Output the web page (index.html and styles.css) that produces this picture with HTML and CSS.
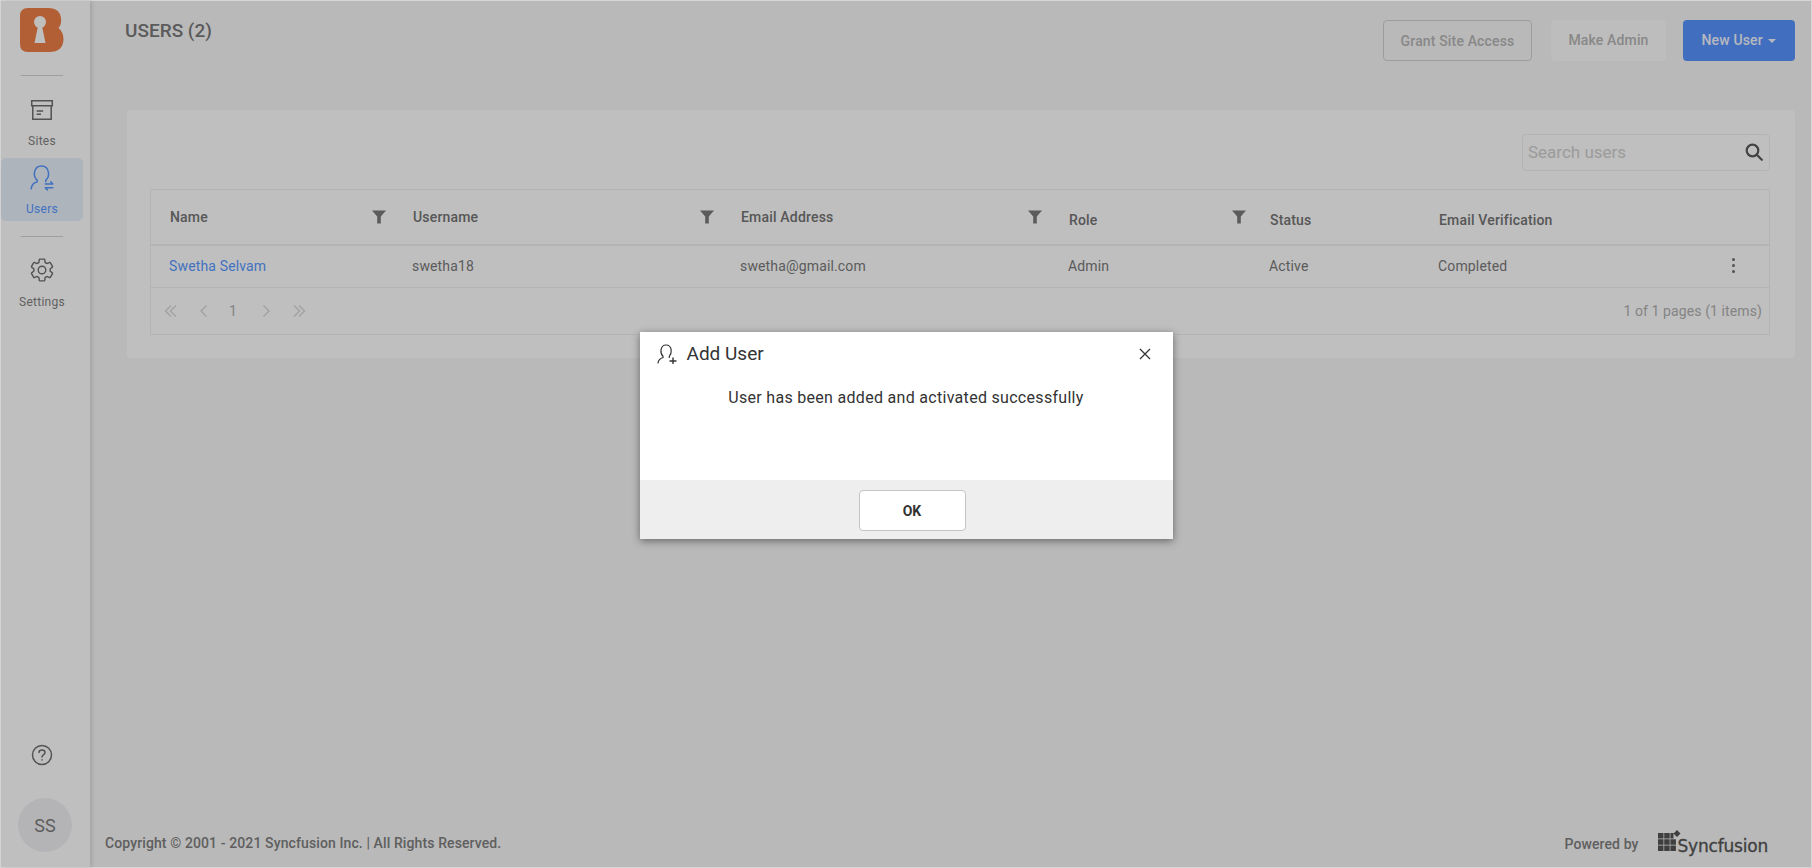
FILE: index.html
```html
<!DOCTYPE html>
<html lang="en">
<head>
<meta charset="utf-8">
<title>Users</title>
<link rel="stylesheet" href="styles.css">
</head>
<body>
<div class="app">
  <aside class="sidebar">
    <svg class="logo" viewBox="0 0 44 44"><path fill="#ee7f47" d="M8 0H29Q39.500 0 41 10Q41.800 16.500 38.500 20Q43.500 24 43.500 31.500Q43 44 29 44H8Q0 44 0 36V8Q0 0 8 0Z"/><circle cx="20" cy="14" r="6" fill="#fff"/><path fill="#fff" d="M18 18H22L25.500 35H14.500Z"/></svg>
    <div class="rule"></div>
    <a class="nav">
      <svg class="nav-icon" viewBox="0 0 24 24" fill="none" stroke="#6f6f6f" stroke-width="1.400"><path d="M2.500 3.500H21.500V8H2.500Z"/><path d="M3.500 8V20.500H20.500V8"/><path d="M7 13H13M7 16H11"/></svg>
      <span>Sites</span>
    </a>
    <a class="nav active">
      <svg class="nav-icon" viewBox="0 0 24 24" fill="none" stroke="#5898ff" stroke-width="1.400" stroke-linecap="round"><path d="M2 22Q2.500 17 7.500 15.500V14Q4.500 11.500 5 7Q6 1 11.500 1Q17 1 18 7Q18.500 11.500 15.500 14V15.500"/><path d="M15 17.500H22M20 15.500L22 17.500M15 21H22M17 23L15 21"/></svg>
      <span>Users</span>
    </a>
    <div class="rule rule-b"></div>
    <a class="nav nav-settings">
      <svg class="nav-icon" viewBox="0 0 24 24" fill="none" stroke="#6f6f6f" stroke-width="1.300" stroke-linejoin="round"><circle cx="12" cy="12" r="3.500"/><path d="M19.430 12.980c.04-.32.07-.64.07-.98s-.03-.66-.07-.98l2.110-1.650c.19-.15.24-.42.12-.64l-2-3.460c-.12-.22-.39-.3-.61-.22l-2.490 1c-.52-.4-1.080-.73-1.690-.98l-.38-2.650C14.460 2.180 14.250 2 14 2h-4c-.25 0-.46.18-.49.42l-.38 2.650c-.61.25-1.170.59-1.690.98l-2.490-1c-.23-.09-.49 0-.61.22l-2 3.460c-.13.22-.07.49.12.64l2.110 1.650c-.04.32-.07.65-.07.98s.03.66.07.98l-2.110 1.650c-.19.15-.24.42-.12.64l2 3.460c.12.22.39.3.61.22l2.490-1c.52.4 1.080.73 1.690.98l.38 2.650c.03.24.24.42.49.42h4c.25 0 .46-.18.49-.42l.38-2.650c.61-.25 1.170-.59 1.690-.98l2.490 1c.23.09.49 0 .61-.22l2-3.460c.12-.22.07-.49-.12-.64l-2.110-1.650z"/></svg>
      <span>Settings</span>
    </a>
    <svg class="help" viewBox="0 0 22 22" fill="none" stroke="#6f6f6f" stroke-width="1.500" stroke-linecap="round"><circle cx="11" cy="11" r="9.500"/><path d="M8 8.500Q8 6 11 6Q14 6 14 8.500Q14 10 12.300 10.800Q11 11.500 11 13"/><path d="M11 15.800V16"/></svg>
    <div class="avatar">SS</div>
  </aside>
  <main class="main">
    <header class="topbar">
      <h1 class="title">USERS (2)</h1>
      <div class="actions">
        <button class="btn btn-outline">Grant Site Access</button>
        <button class="btn btn-soft">Make Admin</button>
        <button class="btn btn-primary">New User <span class="caret"></span></button>
      </div>
    </header>
    <section class="card">
      <div class="search">
        <span class="placeholder">Search users</span>
        <svg class="search-icon" viewBox="0 0 18 18" fill="none" stroke="#5a5a5a" stroke-width="2.200"><circle cx="7.500" cy="7.500" r="5.800"/><path d="M11.800 11.800L16.800 16.800" stroke-linecap="round"/></svg>
      </div>
      <div class="grid">
        <table class="table">
          <thead>
            <tr>
              <th class="c1"><div class="th"><span>Name</span><svg class="filter" viewBox="0 0 14 14"><path d="M0 .5H14L8.800 6.500V13.500H5.200V6.500Z"/></svg></div></th>
              <th class="c2"><div class="th"><span>Username</span><svg class="filter" viewBox="0 0 14 14"><path d="M0 .5H14L8.800 6.500V13.500H5.200V6.500Z"/></svg></div></th>
              <th class="c3"><div class="th"><span>Email Address</span><svg class="filter" viewBox="0 0 14 14"><path d="M0 .5H14L8.800 6.500V13.500H5.200V6.500Z"/></svg></div></th>
              <th class="c4 low"><div class="th th-role"><span>Role</span><svg class="filter" viewBox="0 0 14 14"><path d="M0 .5H14L8.800 6.500V13.500H5.200V6.500Z"/></svg></div></th>
              <th class="c5 low"><span>Status</span></th>
              <th class="low"><span>Email Verification</span></th>
            </tr>
          </thead>
          <tbody>
            <tr>
              <td><a class="link">Swetha Selvam</a></td>
              <td>swetha18</td>
              <td>swetha@gmail.com</td>
              <td>Admin</td>
              <td>Active</td>
              <td><div class="last"><span>Completed</span><span class="dots"><i></i><i></i><i></i></span></div></td>
            </tr>
          </tbody>
        </table>
        <div class="pager">
          <div class="pages">
            <svg class="pg" viewBox="0 0 14 14"><path d="M7 1.500L1.500 7L7 12.500M12 1.500L6.500 7L12 12.500"/></svg>
            <svg class="pg pg-gap" viewBox="0 0 14 14"><path d="M9.500 1.500L4 7L9.500 12.500"/></svg>
            <span class="num">1</span>
            <svg class="pg" viewBox="0 0 14 14"><path d="M4.500 1.500L10 7L4.500 12.500"/></svg>
            <svg class="pg pg-gap" viewBox="0 0 14 14"><path d="M2 1.500L7.500 7L2 12.500M7 1.500L12.500 7L7 12.500"/></svg>
          </div>
          <span class="count">1 of 1 pages (1 items)</span>
        </div>
      </div>
    </section>
    <footer class="footer">
      <span class="copy">Copyright © 2001 - 2021 Syncfusion Inc. | All Rights Reserved.</span>
      <div class="powered">
        <span>Powered by</span>
        <div class="sf">
          <svg class="sf-mark" viewBox="0 0 24 24"><path fill="#555" d="M0 3H5.500V8.500H0ZM6.200 3H11.700V8.500H6.200ZM12.400 3H15.500V8.500H12.400ZM0 9.200H5.500V14.700H0ZM6.200 9.200H11.700V14.700H6.200ZM12.400 9.200H17.900V14.700H12.400ZM0 15.400H5.500V21H0ZM6.200 15.400H11.700V21H6.200ZM12.400 15.400H17.900V21H12.400ZM19 0L22.500 3.500L19 7L15.500 3.500Z"/></svg>
          <span class="sf-word">Syncfusion</span>
        </div>
      </div>
    </footer>
  </main>
  <div class="overlay">
    <div class="dialog">
      <div class="dlg-head">
        <svg class="dlg-icon" viewBox="0 0 20 20" fill="none" stroke="#333" stroke-width="1.200" stroke-linecap="round"><path d="M1 19Q1.500 15 6 13.500V12.300Q3.500 10 4 6Q4.800 1 9 1Q13.500 1 14.200 6Q14.500 10 12.300 12.300V13.500"/><path d="M13 17H19M16 14V20" stroke-width="1.400"/></svg>
        <span class="dlg-title">Add User</span>
        <svg class="dlg-close" viewBox="0 0 12 12" fill="none" stroke="#333" stroke-width="1.300"><path d="M1 1L11 11M11 1L1 11"/></svg>
      </div>
      <p class="dlg-msg">User has been added and activated successfully</p>
      <div class="dlg-foot"><button class="ok">OK</button></div>
    </div>
  </div>
</div>
</body>
</html>
```

FILE: styles.css
```css
* { box-sizing: border-box; }
html, body { margin: 0; height: 100%; }
body { font-family: Roboto, "Liberation Sans", sans-serif; overflow: hidden; }

.app {
  position: relative;
  display: flex;
  height: 868px;
  border: 1px solid #d6d6d6;
  background: #f7f7f7;
}

.overlay {
  position: absolute;
  inset: 0;
  background: rgba(0, 0, 0, .25);
  display: flex;
  align-items: center;
  justify-content: center;
}

/* sidebar */
.sidebar {
  width: 89px;
  flex: none;
  display: flex;
  flex-direction: column;
  align-items: center;
  background: #fff;
  box-shadow: 2px 0 4px rgba(0, 0, 0, .12);
  padding: 7px 7px 0 0;
}
.logo { width: 44px; height: 44px; flex: none; }
.rule { width: 42px; height: 1px; background: #d4d4d4; margin-top: 23px; flex: none; }
.rule-b { margin-top: 15px; }
.nav {
  width: 82px;
  height: 63px;
  border-radius: 5px;
  display: flex;
  flex-direction: column;
  align-items: center;
  color: #828282;
  font-size: 12px;
  letter-spacing: .25px;
  line-height: 14px;
  padding-top: 7px;
  flex: none;
  margin-top: 5px;
}
.rule + .nav { margin-top: 14px; }
.rule-b + .nav { margin-top: 13px; }
.nav span { margin-top: 11px; }
.nav-settings span { margin-top: 12px; }
.nav-icon { width: 26px; height: 26px; flex: none; }
.nav.active { background: #e7f0fb; color: #5898ff; }
.help { width: 22px; height: 22px; margin-top: auto; flex: none; }
.avatar {
  width: 54px;
  height: 54px;
  border-radius: 50%;
  background: #f0f1f5;
  color: #7d7d7d;
  font-size: 18px;
  display: flex;
  align-items: center;
  justify-content: center;
  margin: 32px 0 15px 6px;
  flex: none;
}

/* main */
.main {
  flex: 1;
  min-width: 0;
  display: flex;
  flex-direction: column;
  padding: 0 16px 0 15px;
}
.topbar {
  display: flex;
  justify-content: space-between;
  height: 109px;
  flex: none;
  padding-top: 19px;
}
.title {
  margin: 0 0 0 20px;
  font-size: 19px;
  line-height: 22px;
  font-weight: 500;
  color: #7a7a7a;
}
.actions { display: flex; gap: 17px; align-items: flex-start; }
.btn {
  height: 41px;
  font-family: inherit;
  font-size: 14px;
  letter-spacing: .15px;
  font-weight: 500;
  border-radius: 4px;
  border: 1px solid transparent;
  padding: 0;
}
.btn-outline { width: 149px; background: transparent; border-color: #d2d2d2; color: #b6b6b6; margin-right: 2px; }
.btn-soft { width: 115px; background: #fcfcfc; color: #b6b6b6; padding-bottom: 2px; }
.btn-primary { width: 112px; background: #5893ff; color: #f2f6ff; padding-bottom: 2px; }
.caret {
  display: inline-block;
  vertical-align: middle;
  margin-left: 2px;
  border: 4px solid transparent;
  border-top-color: #f2f6ff;
  border-bottom-width: 0;
}

.card {
  background: #fff;
  border-radius: 4px;
  padding: 24px 25px 23px 23px;
  height: 248px;
  margin-left: 22px;
  flex: none;
  display: flex;
  flex-direction: column;
}
.search {
  align-self: flex-end;
  width: 248px;
  height: 37px;
  border: 1px solid #f0f0f0;
  border-radius: 4px;
  display: flex;
  align-items: center;
  justify-content: space-between;
  padding: 0 6px 1px 5px;
  margin-bottom: 18px;
}
.placeholder { font-size: 17px; color: #cfcfcf; }
.search-icon { width: 18px; height: 18px; }
.grid { border: 1px solid #f0f0f0; flex: 1; }
.table { width: 100%; border-collapse: collapse; table-layout: fixed; }
.table th {
  height: 55px;
  padding: 0 0 0 19px;
  text-align: left;
  font-size: 14px;
  letter-spacing: .18px;
  font-weight: 500;
  color: #747474;
  border-bottom: 2px solid #f0f0f0;
}
.table th.low span { position: relative; top: 3px; }
.c1 { width: 243px; }
.c2, .c3 { width: 328px; }
.c4 { width: 201px; }
.c5 { width: 169px; }
.th { display: flex; justify-content: space-between; align-items: center; padding-right: 8px; }
.th-role { padding-right: 5px; }
.filter { width: 14px; height: 14px; fill: #7a7a7a; }
.table td {
  height: 42px;
  padding: 0 0 0 18px;
  font-size: 14px;
  letter-spacing: .15px;
  color: #7a7a7a;
  border-bottom: 1px solid #f0f0f0;
}
.link { color: #5898ff; }
.last { display: flex; justify-content: space-between; align-items: center; padding-right: 34px; }
.dots { display: flex; flex-direction: column; gap: 3px; margin-bottom: 2px; }
.dots i { width: 3px; height: 3px; border-radius: 50%; background: #6f6f6f; display: block; }
.pager {
  display: flex;
  justify-content: space-between;
  align-items: center;
  height: 46px;
  padding: 0 7px 0 13px;
}
.pages { display: flex; align-items: center; }
.pg { width: 14px; height: 14px; fill: none; stroke: #d6d6d6; stroke-width: 1.300; }
.pg-gap { margin-left: 19px; }
.num { font-size: 14px; color: #b0b0b0; width: 14px; margin: 0 16px 0 18px; }
.count { font-size: 14px; letter-spacing: .1px; color: #b0b0b0; }

.footer {
  margin-top: auto;
  display: flex;
  justify-content: space-between;
  align-items: flex-end;
  padding-bottom: 12px;
}
.copy { font-size: 14px; letter-spacing: .11px; font-weight: 500; color: #7f7f7f; margin-bottom: 4px; }
.powered { display: flex; align-items: flex-end; gap: 19px; font-size: 14px; letter-spacing: .1px; font-weight: 500; color: #7f7f7f; margin-right: 27px; }
.powered > span { margin-bottom: 3px; }
.sf { display: flex; align-items: flex-end; }
.sf-mark { width: 24px; height: 24px; margin-bottom: 1px; flex: none; }
.sf-word {
  font-family: "DejaVu Sans", sans-serif;
  font-size: 17px;
  line-height: 18px;
  font-weight: 400;
  color: #555;
  margin-left: -4px;
  letter-spacing: -.2px;
  -webkit-text-stroke: .3px #555;
}

/* dialog */
.dialog {
  width: 533px;
  height: 207px;
  margin-top: 3px;
  background: #fff;
  box-shadow: 0 2px 8px rgba(0, 0, 0, .45);
  display: flex;
  flex-direction: column;
  color: #333;
}
.dlg-head {
  display: flex;
  align-items: center;
  height: 43px;
  flex: none;
  padding: 0 22px 0 17px;
}
.dlg-icon { width: 20px; height: 20px; flex: none; }
.dlg-title { font-size: 19px; margin-left: 10px; }
.dlg-close { width: 12px; height: 12px; margin-left: auto; flex: none; }
.dlg-msg { margin: 13px 0 0; text-align: center; font-size: 16px; letter-spacing: .3px; line-height: 20px; }
.dlg-foot {
  margin-top: auto;
  height: 59px;
  background: #eeeeee;
  display: flex;
  justify-content: center;
  padding: 10px 0 8px 12px;
}
.ok {
  width: 107px;
  background: #fff;
  border: 1px solid #c4c4c4;
  border-radius: 4px;
  font-family: inherit;
  font-size: 14px;
  font-weight: 700;
  color: #333;
}
```
